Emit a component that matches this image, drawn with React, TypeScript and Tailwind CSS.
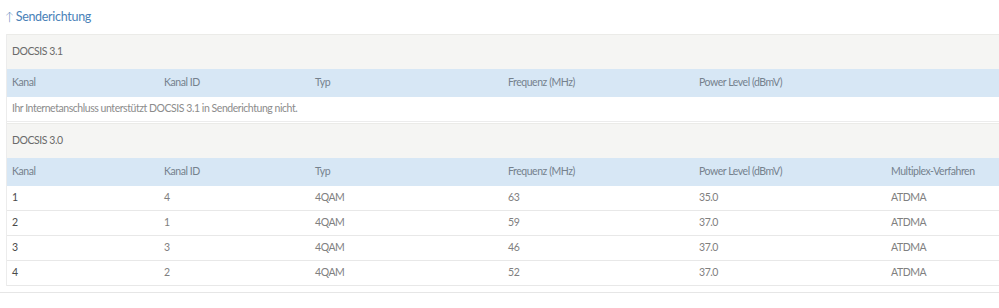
const cols = ['Kanal', 'Kanal ID', 'Typ', 'Frequenz (MHz)', 'Power Level (dBmV)'];
const cols30 = [...cols, 'Multiplex-Verfahren'];

const rows = [
  ['1', '4', '4QAM', '63', '35.0', 'ATDMA'],
  ['2', '1', '4QAM', '59', '37.0', 'ATDMA'],
  ['3', '3', '4QAM', '46', '37.0', 'ATDMA'],
  ['4', '2', '4QAM', '52', '37.0', 'ATDMA'],
];

const widths = ['w-[152px]', 'w-[151px]', 'w-[193px]', 'w-[191px]', 'w-[192px]', 'w-[140px]'];

function HeadRow({ labels }: { labels: string[] }) {
  return (
    <div className="flex h-[28px] items-center bg-[#d7e7f5] text-[#75818d]">
      {labels.map((l, i) => (
        <div key={l} className={`${widths[i]} shrink-0 pl-[5px]`}>{l}</div>
      ))}
    </div>
  );
}

function GroupTitle({ children }: { children: React.ReactNode }) {
  return (
    <div className="flex h-[35px] items-center bg-[#f5f5f3] pl-[5px] text-[#6a6a6a] border-t border-[#ebebe8]">
      {children}
    </div>
  );
}

export default function App() {
  return (
    <div
      className="w-[999px] h-[308px] overflow-hidden bg-white text-[10.5px] tracking-[-0.45px]"
      style={{ fontFamily: 'Lato, "Open Sans", sans-serif' }}
    >
      <h2 className="flex items-start gap-[2px] pl-[5px] pt-[9px] h-[34px] text-[12.5px] leading-[16px] text-[#4a82b8] tracking-[-0.3px]">
        <span className="text-[12px] font-light">↑</span>
        <span>Senderichtung</span>
      </h2>
      <div className="pb-[6px] border-b border-[#e6e6e6]">
        <div className="ml-[6px] border-l border-[#ececec]">
          <GroupTitle>DOCSIS 3.1</GroupTitle>
          <HeadRow labels={cols} />
          <div className="flex h-[25px] items-center pl-[5px] text-[#8c8c8c] border-b border-[#ececec]">
            Ihr Internetanschluss unterstützt DOCSIS 3.1 in Senderichtung nicht.
          </div>
          <div className="h-[1px]" />
          <GroupTitle>DOCSIS 3.0</GroupTitle>
          <HeadRow labels={cols30} />
          {rows.map((r) => (
            <div key={r[0]} className="flex h-[25px] items-center border-b border-[#e8e8e8]">
              {r.map((c, i) => (
                <div
                  key={i}
                  className={`${widths[i]} shrink-0 pl-[5px] ${i === 0 ? 'text-[#4a4a4a]' : 'text-[#808080]'}`}
                >
                  {c}
                </div>
              ))}
            </div>
          ))}
        </div>
      </div>
    </div>
  );
}
